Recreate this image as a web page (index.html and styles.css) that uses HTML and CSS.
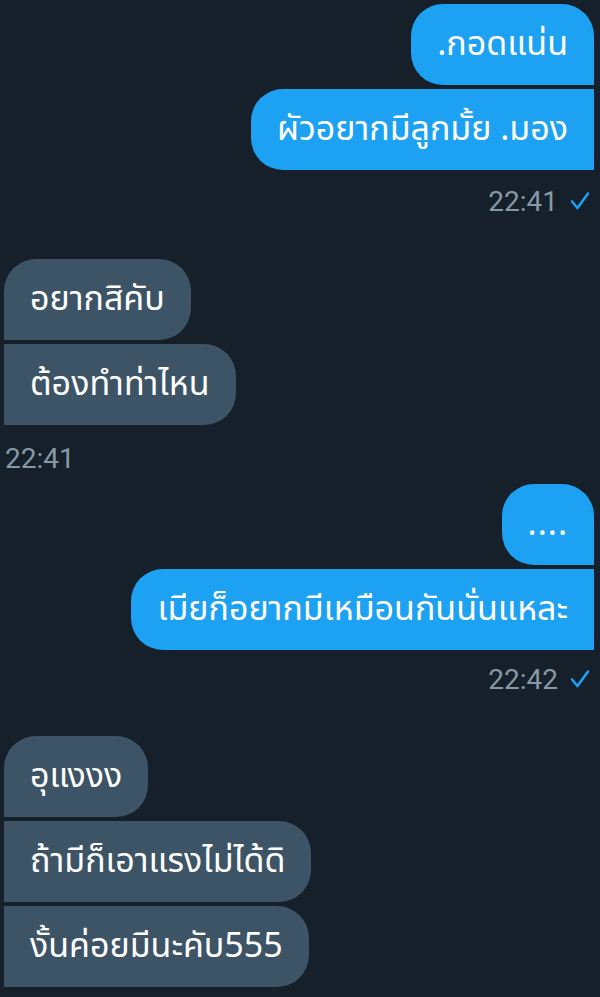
FILE: index.html
```html
<!DOCTYPE html>
<html lang="th">
<head>
<meta charset="utf-8">
<link rel="stylesheet" href="styles.css">
</head>
<body>
<main class="chat">
  <section class="group sent g1">
    <div class="bubble first">.กอดแน่น</div>
    <div class="bubble last">ผัวอยากมีลูกมั้ย .มอง</div>
    <div class="meta"><span class="time">22:41</span><svg class="check" viewBox="0 0 20 20" width="20" height="20"><path d="M2 10.5 L7.5 17 L18 2.5" fill="none" stroke="#1da1f2" stroke-width="2.6" stroke-linecap="round" stroke-linejoin="round"/></svg></div>
  </section>
  <section class="group recv g2">
    <div class="bubble first">อยากสิคับ</div>
    <div class="bubble last">ต้องทำท่าไหน</div>
    <div class="meta"><span class="time">22:41</span></div>
  </section>
  <section class="group sent g3">
    <div class="bubble first dots">....</div>
    <div class="bubble last">เมียก็อยากมีเหมือนกันนั่นแหละ</div>
    <div class="meta"><span class="time">22:42</span><svg class="check" viewBox="0 0 20 20" width="20" height="20"><path d="M2 10.5 L7.5 17 L18 2.5" fill="none" stroke="#1da1f2" stroke-width="2.6" stroke-linecap="round" stroke-linejoin="round"/></svg></div>
  </section>
  <section class="group recv g4">
    <div class="bubble first">อุแงงง</div>
    <div class="bubble mid">ถ้ามีก็เอาแรงไม่ได้ดิ</div>
    <div class="bubble last">งั้นค่อยมีนะคับ555</div>
  </section>
</main>
</body>
</html>
```
FILE: styles.css
```css
html, body {
  margin: 0;
  padding: 0;
  background: #15202b;
}
body {
  width: 600px;
  height: 997px;
  overflow: hidden;
  font-family: "Noto Sans Thai", "Noto Sans", Roboto, sans-serif;
}
.chat {
  display: flex;
  flex-direction: column;
  padding: 4px 6px 0 4px;
}
.group {
  display: flex;
  flex-direction: column;
  gap: 4px;
}
.sent { align-items: flex-end; }
.recv { align-items: flex-start; }
.bubble {
  height: 81px;
  box-sizing: border-box;
  padding: 0 26px;
  display: flex;
  align-items: center;
  font-size: 34px;
  color: #ffffff;
  white-space: nowrap;
}
.sent .bubble { background: #1da1f2; }
.recv .bubble { background: #3d5466; }
.sent .first { border-radius: 32px 32px 0 32px; }
.sent .last { border-radius: 32px 0 0 32px; }
.recv .first { border-radius: 32px 32px 32px 0; }
.recv .mid, .recv .last { border-radius: 0 32px 32px 0; }
.dots { letter-spacing: 1px; }
.meta {
  display: flex;
  align-items: center;
  gap: 12px;
  height: 30px;
  margin-top: 12px;
  font-family: Roboto, "Liberation Sans", sans-serif;
  font-size: 28px;
  color: #8899a6;
}
.recv .meta { margin-top: 14px; padding-left: 1px; }
.check { margin-right: 4px; }
.g2 { margin-top: 43px; }
.g3 { margin-top: 11px; }
.g3 .meta { margin-top: 10px; }
.g4 { margin-top: 42px; }
```
